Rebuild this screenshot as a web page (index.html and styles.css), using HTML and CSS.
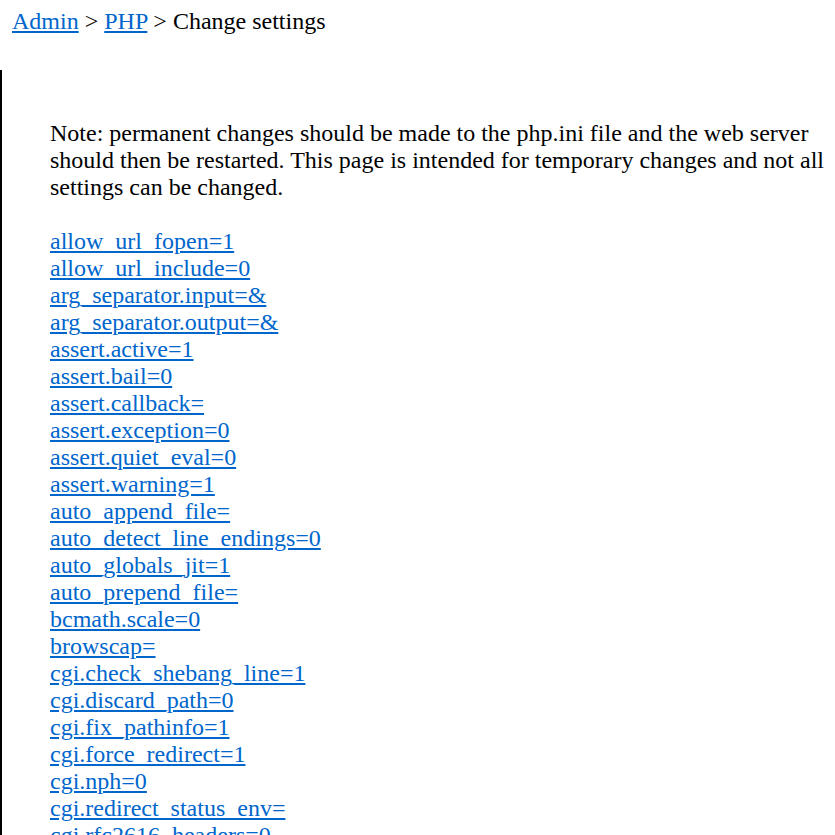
FILE: index.html
```html
<!DOCTYPE html>
<html lang="en">
<head>
    <meta charset="UTF-8">
    <meta name="viewport" content="width=device-width, initial-scale=1.0">
    <title>Change settings</title>
    <link rel="stylesheet" href="styles.css">
</head>
<body>

<div class="crumbs">
    <a href="#">Admin</a> &gt; <a href="#">PHP</a> &gt; Change settings
</div>

<div class="main">
    <p class="note">Note: permanent changes should be made to the php.ini file and the web server should then be restarted. This page is intended for temporary changes and not all settings can be changed.</p>

    <ul class="settings">
        <li><a href="#">allow_url_fopen=1</a></li>
        <li><a href="#">allow_url_include=0</a></li>
        <li><a href="#">arg_separator.input=&amp;</a></li>
        <li><a href="#">arg_separator.output=&amp;</a></li>
        <li><a href="#">assert.active=1</a></li>
        <li><a href="#">assert.bail=0</a></li>
        <li><a href="#">assert.callback=</a></li>
        <li><a href="#">assert.exception=0</a></li>
        <li><a href="#">assert.quiet_eval=0</a></li>
        <li><a href="#">assert.warning=1</a></li>
        <li><a href="#">auto_append_file=</a></li>
        <li><a href="#">auto_detect_line_endings=0</a></li>
        <li><a href="#">auto_globals_jit=1</a></li>
        <li><a href="#">auto_prepend_file=</a></li>
        <li><a href="#">bcmath.scale=0</a></li>
        <li><a href="#">browscap=</a></li>
        <li><a href="#">cgi.check_shebang_line=1</a></li>
        <li><a href="#">cgi.discard_path=0</a></li>
        <li><a href="#">cgi.fix_pathinfo=1</a></li>
        <li><a href="#">cgi.force_redirect=1</a></li>
        <li><a href="#">cgi.nph=0</a></li>
        <li><a href="#">cgi.redirect_status_env=</a></li>
        <li><a href="#">cgi.rfc2616_headers=0</a></li>
        <li><a href="#">child_terminate=0</a></li>
        <li><a href="#">cli.pager=</a></li>
        <li><a href="#">cli.prompt=\b \&gt; </a></li>
    </ul>
</div>

</body>
</html>
```

FILE: styles.css
```css
* {
    margin: 0;
    padding: 0;
    box-sizing: border-box;
}

body {
    font-family: 'Liberation Serif', 'Times New Roman', serif;
    font-size: 24px;
    line-height: 27px;
    color: #000;
    background-color: white;
}

a {
    color: #0066cc;
}

.crumbs {
    padding: 8px 0 0 12px;
    height: 70px;
}

.main {
    border-left: 2px solid black;
    padding: 50px 0 0 48px;
}

.note {
    margin-bottom: 27px;
}

.settings {
    list-style: none;
}
```
